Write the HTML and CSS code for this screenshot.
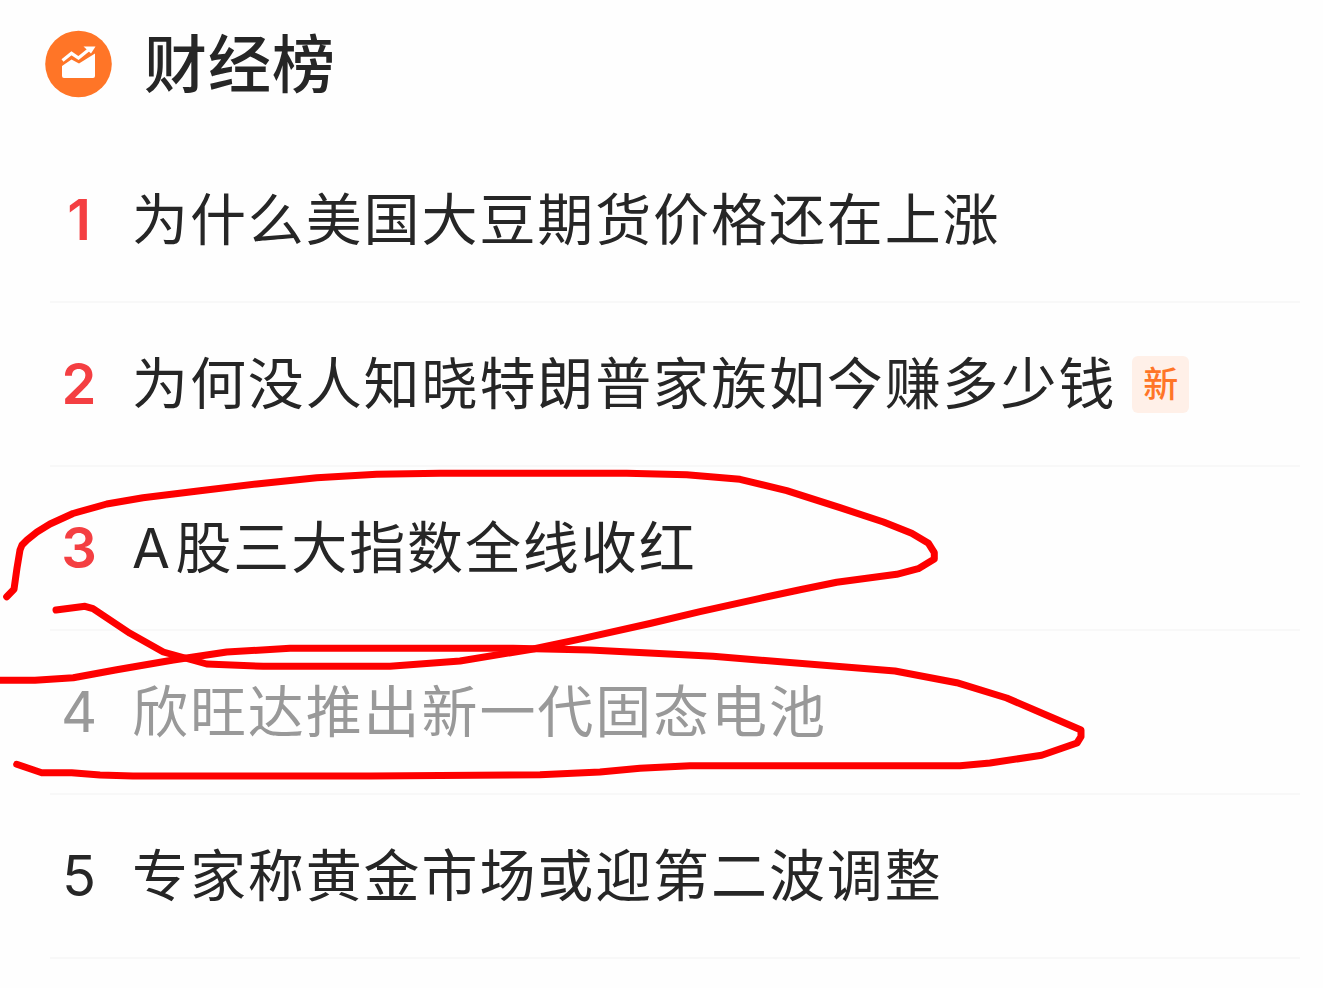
FILE: index.html
```html
<!DOCTYPE html>
<html lang="zh-CN">
<head>
    <meta charset="UTF-8">
    <meta name="viewport" content="width=device-width, initial-scale=1.0">
    <title>财经榜</title>
    <link rel="stylesheet" href="styles.css">
</head>
<body>
    <div class="board">
        <header class="board-header">
            <svg class="board-icon" viewBox="0 0 68 68">
                <circle cx="34.5" cy="34" r="33.3" fill="#ff7527"/>
                <path d="M18.5 30.5 L27.5 23.3 L34.5 28 L45 19.5" fill="none" stroke="#fff" stroke-width="3.2"/>
                <path d="M39.5 16.5 H51.5 L47 23.5 Z" fill="#fff"/>
                <path d="M18 36 L27.5 29.5 L35 33.5 L51 23.5 V46 Q51 48 49 48 H20 Q18 48 18 46 Z" fill="#fff"/>
            </svg>
            <h1>财经榜</h1>
        </header>

        <ol class="list">
            <li class="item">
                <span class="rank top">1</span>
                <span class="text">为什么美国大豆期货价格还在上涨</span>
            </li>
            <li class="item">
                <span class="rank top">2</span>
                <span class="text">为何没人知晓特朗普家族如今赚多少钱</span>
                <span class="tag">新</span>
            </li>
            <li class="item">
                <span class="rank top">3</span>
                <span class="text"><span class="latin">A</span>股三大指数全线收红</span>
            </li>
            <li class="item visited">
                <span class="rank">4</span>
                <span class="text">欣旺达推出新一代固态电池</span>
            </li>
            <li class="item">
                <span class="rank">5</span>
                <span class="text">专家称黄金市场或迎第二波调整</span>
            </li>
        </ol>

        <!-- hand-drawn marks over items 3 and 4 -->
        <svg class="marks" viewBox="0 0 1323 988">
            <polyline points="6.7,596.7 14,589.3 17,568 20,550 22,545 27,540 37,532 50,524 73,513.5 106.7,504 143,497.7 200,490.7 256.7,484 316.7,477.7 376.7,474.3 440,473.3 626.7,473.3 686.7,474.7 740,479.3 786.7,490.7 840,507.7 883.5,522 911.7,533.3 928.5,543.3 934.3,552.7 934.3,559 918.3,568.7 896.7,574.3 836.7,582.3 800,589.7 760,598.3 700,611.7 650,623.5 583.3,638.3 533.3,649 460,661 390,666.3 263.3,666.3 206.7,664 163.3,652 130,633.3 93,608.7 85,606.3 56,610"/>
            <polyline points="-6,680.3 35,680.3 73.3,677.7 116.7,669.7 173.3,660 226.7,652 290,648.3 513,648.3 590,650 713,656.3 895,671 956.7,682.7 1006.7,698 1056.7,719.5 1081,730 1081,736.7 1077,743 1041.7,755.3 990,763 960,765.7 690,765.7 640,768.3 600,772 540,774.7 370,776 133,776 100,775 71.7,772.7 41.7,772.7 16.7,764.3"/>
        </svg>
    </div>
</body>
</html>
```
FILE: styles.css
```css
* {
    box-sizing: border-box;
}
body {
    margin: 0;
    background: #fefefe;
    color: #262626;
    font-family: Inter, "Noto Sans CJK SC", sans-serif;
}
.board {
    position: relative;
    height: 988px;
    padding: 0 23px 0 50px;
    overflow: hidden;
}
.board-header {
    display: flex;
    align-items: center;
    gap: 32px;
    height: 139px;
    margin-left: -6px;
    padding-bottom: 11px;
}
.board-icon {
    width: 68px;
    height: 68px;
}
h1 {
    margin: 0;
    font-size: 63px;
    font-weight: 500;
    line-height: 80px;
    letter-spacing: 1px;
}
.list {
    margin: 0;
    padding: 0;
    list-style: none;
}
.item {
    display: flex;
    align-items: center;
    height: 164px;
    border-bottom: 2px solid #f8f8f8;
}
.rank {
    width: 58px;
    margin-right: 24px;
    font-size: 56px;
    line-height: 80px;
    text-align: center;
}
.rank.top {
    color: #f43f42;
    font-weight: 600;
}
.text {
    font-size: 56px;
    line-height: 80px;
    letter-spacing: 1.9px;
    white-space: nowrap;
}
.latin {
    font-size: 55px;
    letter-spacing: 5.5px;
}
.visited {
    color: #999;
}
.tag {
    width: 57px;
    height: 57px;
    margin-left: 16px;
    border-radius: 6px;
    background: #fff0e8;
    color: #ff7527;
    font-size: 35px;
    font-weight: 500;
    line-height: 57px;
    text-align: center;
}
.marks {
    position: absolute;
    top: 0;
    left: 0;
    width: 1323px;
    height: 988px;
}
.marks polyline {
    fill: none;
    stroke: #fe0000;
    stroke-width: 7;
    stroke-linecap: round;
    stroke-linejoin: round;
}
```
